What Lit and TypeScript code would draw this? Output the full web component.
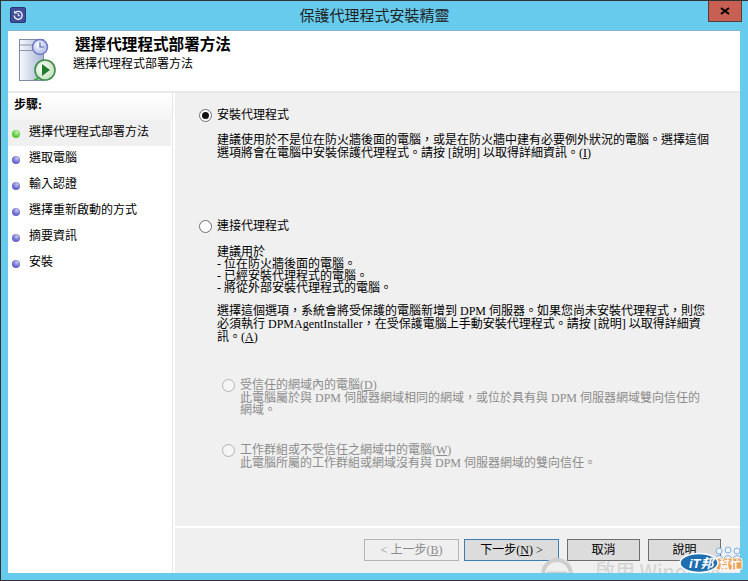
import { LitElement, html, css } from "lit";
import { customElement } from "lit/decorators.js";

const STEPS = ["選擇代理程式部署方法", "選取電腦", "輸入認證", "選擇重新啟動的方式", "摘要資訊", "安裝"];

@customElement("app-root")
export class AppRoot extends LitElement {
  static styles = css`
    :host { display: block; width: 748px; height: 581px; overflow: hidden; position: relative;
      font-family: "Liberation Serif", "Noto Sans CJK TC", serif; font-size: 12px; line-height: 13px; color: #000; }
    .win { box-sizing: border-box; width: 748px; height: 581px; background: #66cbec; border-top: 1px solid #333; border-left: 1px solid #333;
      border-bottom: 1px solid #333; display: flex; flex-direction: column; }
    .title { height: 29px; flex: none; display: flex; align-items: flex-start; position: relative; padding-left: 9px; }
    .appicon { margin-top: 6px; width: 16px; height: 16px; display: block; }
    .title-text { position: absolute; left: 0; right: 0; top: 7px; text-align: center; font-size: 15px; line-height: 16px; color: #222; }
    .close { position: absolute; right: 6px; top: 0; box-sizing: border-box; width: 34px; height: 21px; background: #c75f52;
      border: 1px solid #553b3a; border-top: 0; display: flex; align-items: center; justify-content: center; }
    .body { flex: 1; margin: 0 8px 7px 7px; display: flex; flex-direction: column; background: #fff; min-height: 0; border-top: 1px solid #84b5ca; }
    .head { height: 60px; flex: none; display: flex; border-bottom: 2px solid #e8e8e8; box-sizing: content-box; }
    .head svg { margin: 7px 0 0 11px; width: 40px; height: 46px; flex: none; }
    .head-text { margin-left: 14px; padding-top: 5px; }
    .head-title { font-size: 15.6px; line-height: 18px; font-weight: 700; margin-left: 2px; }
    .head-sub { margin-top: 3px; line-height: 14px; font-size: 12px; }
    .main { flex: 1; display: flex; min-height: 0; }
    .side { width: 165px; box-sizing: border-box; flex: none; border-right: 1px solid #e6e6e6; margin-right: 2px; background: #fff; }
    .side-head { height: 27px; padding: 6px 0 0 6px; box-sizing: border-box; font-weight: 700; line-height: 13px; background: linear-gradient(#fff, #f4f4f4); }
    .step { height: 26px; box-sizing: border-box; padding: 0 0 2px 4px; display: flex; align-items: center; margin-right: 1px; }
    .step.cur { background: #f0f0f0; }
    .dot { width: 8px; height: 8px; border-radius: 50%; margin-top: 4px; background: radial-gradient(circle at 60% 30%, #c9c9f0, #6a6ad0 55%, #5a5abf); flex: none; margin-right: 9px; }
    .dot.on { background: radial-gradient(circle at 60% 30%, #c5f0b0, #5dcb3a 55%, #45ad2c); }
    .panel { flex: 1; background: #f0f0f0; display: flex; flex-direction: column; }
    .content { height: 435px; flex: none; padding: 16px 0 0 24px; box-sizing: border-box; border-bottom: 2px solid #fff; }
    .radio-row { display: flex; align-items: center; height: 13px; }
    .radio { box-sizing: border-box; width: 13px; height: 13px; border-radius: 50%; border: 1px solid #6f6f6f; background: #fff; margin-right: 5px; flex: none; display: flex; align-items: center; justify-content: center; }
    .radio i { width: 7px; height: 7px; border-radius: 50%; background: #111; display: block; }
    .para { margin: 12px 0 0 18px; }
    .r2 { margin-top: 60px; }
    .p3 { margin-top: 11px; }
    .list { line-height: 12px; margin-top: 13px; }
    .sub { margin: 35px 0 0 23px; color: #8c8c8c; }
    .sub .radio { border-color: #b4b4b4; background: #f5f5f5; }
    .sub p { margin: 0 0 0 18px; line-height: 12px; }
    .sub + .sub { margin-top: 28px; }
    .foot { flex: 1; display: flex; justify-content: flex-end; align-items: flex-start; padding: 11px 19px 0 0; }
    .btn { box-sizing: border-box; height: 22px; border: 1px solid #6e6e6e; background: #dcdcdc; display: flex; align-items: center; justify-content: center; font-size: 12px; }
    .btn.back { width: 95px; border-color: #b5b5b5; background: #efefef; color: #8a8a8a; margin-right: 5px; }
    .btn.next { width: 95px; border-color: #3c7fb1; margin-right: 8px; }
    .btn.cancel { width: 73px; margin-right: 8px; }
    .btn.help { width: 73px; }
    .wm-clip { position: absolute; left: 530px; top: 550px; width: 200px; height: 23px; overflow: hidden; }
    .wm { position: absolute; left: 65px; top: 9px; font-family: "Noto Sans CJK TC", sans-serif; font-size: 20px; line-height: 24px; color: #d3d3d3; white-space: nowrap; }
    .wm-logo { position: absolute; left: 11px; top: 8px; width: 32px; height: 32px; }
    .badge { position: absolute; left: 678px; top: 545px; width: 68px; height: 30px; }
    .badge-it { position: absolute; left: 689px; top: 556px; color: #fff; font: italic 700 13px/16px "Liberation Sans", "Noto Sans CJK TC", sans-serif; white-space: nowrap; }
    .badge-help { position: absolute; left: 719px; top: 558px; color: #fff; font: 700 11px/12px "Noto Sans CJK TC", sans-serif; white-space: nowrap; }
  `;

  render() {
    return html`
      <div class="win">
        <div class="title">
          <svg class="appicon" viewBox="0 0 16 16">
            <rect x=".5" y=".5" width="15" height="15" rx="1.5" fill="#3f4f9a" stroke="#2b3570"/>
            <path d="M4.2 8.5a4 4 0 1 0 1.4-3.2" fill="none" stroke="#fff" stroke-width="1.3"/>
            <path d="M4 3.5v3h3z" fill="#fff"/>
            <path d="M8.2 6v2.8h2" fill="none" stroke="#fff"/>
          </svg>
          <div class="title-text">保護代理程式安裝精靈</div>
          <div class="close">
            <svg width="10" height="8" viewBox="0 0 10 8"><path d="M1 1l8 6M9 1L1 7" stroke="#000" stroke-width="2"/></svg>
          </div>
        </div>
        <div class="body">
          <div class="head">
            <svg viewBox="0 0 40 46">
              <defs>
                <linearGradient id="sv" x1="0" x2="1" y1="0" y2="0"><stop offset="0" stop-color="#f6f8fc"/><stop offset="1" stop-color="#a9b6d4"/></linearGradient>
                <radialGradient id="cl" cx=".4" cy=".35"><stop offset="0" stop-color="#fff"/><stop offset="1" stop-color="#bcc6ea"/></radialGradient>
                <radialGradient id="pl" cx=".4" cy=".4"><stop offset="0" stop-color="#fff"/><stop offset="1" stop-color="#cfe6c8"/></radialGradient>
              </defs>
              <rect x=".5" y="1.5" width="24" height="41" fill="url(#sv)" stroke="#7e8aa8"/>
              <path d="M1 7h23M1 12.500h23" stroke="#8a96b4"/>
              <circle cx="21" cy="9" r="7.500" fill="url(#cl)" stroke="#6e78c4" stroke-width="1.500"/>
              <path d="M21 4.500v4.500h4" fill="none" stroke="#5560a8" stroke-width="1.200"/>
              <circle cx="26" cy="32" r="10" fill="url(#pl)" stroke="#3f8c4a" stroke-width="1.600"/>
              <path d="M23 26l8 6-8 6z" fill="#1f7d2c"/>
              <path d="M14 42h5v-3z" fill="#3fae3a"/>
            </svg>
            <div class="head-text">
              <div class="head-title">選擇代理程式部署方法</div>
              <div class="head-sub">選擇代理程式部署方法</div>
            </div>
          </div>
          <div class="main">
            <div class="side">
              <div class="side-head">步驟:</div>
              ${STEPS.map((s, i) => html`<div class="step ${i === 0 ? "cur" : ""}"><span class="dot ${i === 0 ? "on" : ""}"></span>${s}</div>`)}
            </div>
            <div class="panel">
              <div class="content">
                <div class="radio-row"><span class="radio"><i></i></span>安裝代理程式</div>
                <div class="para">建議使用於不是位在防火牆後面的電腦&#xFF0C;或是在防火牆中建有必要例外狀況的電腦。選擇這個<br>選項將會在電腦中安裝保護代理程式。請按 [說明] 以取得詳細資訊。(<u>I</u>)</div>
                <div class="radio-row r2"><span class="radio"></span>連接代理程式</div>
                <div class="para list">建議用於<br>- 位在防火牆後面的電腦。<br>- 已經安裝代理程式的電腦。<br>- 將從外部安裝代理程式的電腦。</div>
                <div class="para p3">選擇這個選項&#xFF0C;系統會將受保護的電腦新增到 DPM 伺服器。如果您尚未安裝代理程式&#xFF0C;則您<br>必須執行 DPMAgentInstaller&#xFF0C;在受保護電腦上手動安裝代理程式。請按 [說明] 以取得詳細資<br>訊。(<u>A</u>)</div>
                <div class="sub">
                  <div class="radio-row"><span class="radio"></span>受信任的網域內的電腦(<u>D</u>)</div>
                  <p>此電腦屬於與 DPM 伺服器網域相同的網域&#xFF0C;或位於具有與 DPM 伺服器網域雙向信任的<br>網域。</p>
                </div>
                <div class="sub">
                  <div class="radio-row"><span class="radio"></span>工作群組或不受信任之網域中的電腦(<u>W</u>)</div>
                  <p>此電腦所屬的工作群組或網域沒有與 DPM 伺服器網域的雙向信任。</p>
                </div>
              </div>
              <div class="foot">
                <div class="btn back">&lt; 上一步(<u>B</u>)</div>
                <div class="btn next">下一步(<u>N</u>) &gt;</div>
                <div class="btn cancel">取消</div>
                <div class="btn help">說明</div>
              </div>
            </div>
          </div>
        </div>
      </div>
      <div class="wm-clip">
        <svg class="wm-logo" viewBox="0 0 32 32"><circle cx="16" cy="16" r="14" fill="none" stroke="#cfcfcf" stroke-width="4"/><path d="M6 15h20" stroke="#cfcfcf" stroke-width="3"/></svg>
        <div class="wm">啟用 Windows</div>
      </div>
      <svg class="badge" viewBox="0 0 68 30">
        <rect x="38" y="13" width="26" height="12" rx="2.500" fill="#e9a258" stroke="#fff"/>
        <g fill="#eaf3fb" stroke="#7fb2df">
          <circle cx="41" cy="6" r="3"/><circle cx="50" cy="5" r="3"/><circle cx="59" cy="6" r="3"/>
          <path d="M37 13q4-5 8 0M46 13q4-5 8 0M55 13q4-5 8 0"/>
        </g>
        <ellipse cx="21" cy="18" rx="19" ry="9.500" fill="#1f6fb0" stroke="#fff" stroke-width="1.500"/>
      </svg>
      <div class="badge-it">iT邦</div>
      <div class="badge-help">幫忙</div>
    `;
  }
}
